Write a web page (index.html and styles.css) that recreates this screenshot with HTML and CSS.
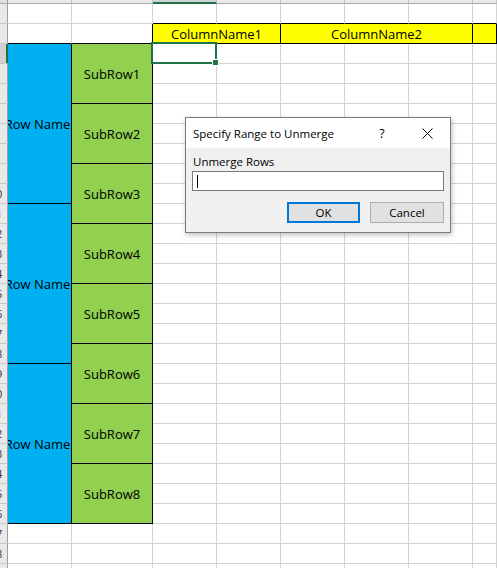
FILE: index.html
```html
<!DOCTYPE html>
<html>
<head>
<meta charset="utf-8">
<title>Sheet</title>
<link rel="stylesheet" href="styles.css">
</head>
<body>
<div class="sheet">
<table class="grid">
<colgroup><col class="c-rh"><col class="c-a"><col class="c-b"><col class="c-n"><col class="c-n"><col class="c-n"><col class="c-n"><col class="c-n"><col class="c-h"></colgroup>
<thead>
<tr class="colhead"><th class="corner"></th><th></th><th></th><th class="colsel"></th><th></th><th></th><th></th><th></th><th></th></tr>
</thead>
<tbody>
<tr><th class="rh"><span>1</span></th><td></td><td></td><td class="bb"></td><td class="bb"></td><td class="bb"></td><td class="bb"></td><td class="bb"></td><td class="bb"></td></tr>
<tr><th class="rh"><span>2</span></th><td class="bb"></td><td class="bb br"></td><td class="yel" colspan="2">ColumnName1</td><td class="yel" colspan="3">ColumnName2</td><td class="yel"></td></tr>
<tr><th class="rh rsel"><span>3</span></th><td class="blue" rowspan="8"><div class="over">Row Name</div></td><td class="green" rowspan="3">SubRow1</td><td class="cur"><div class="sel"><i class="handle"></i></div></td><td></td><td></td><td></td><td></td><td></td></tr>
<tr><th class="rh"><span>4</span></th><td></td><td></td><td></td><td></td><td></td><td></td></tr>
<tr><th class="rh"><span>5</span></th><td></td><td></td><td></td><td></td><td></td><td></td></tr>
<tr><th class="rh"><span>6</span></th><td class="green" rowspan="3">SubRow2</td><td></td><td></td><td></td><td></td><td></td><td></td></tr>
<tr><th class="rh"><span>7</span></th><td></td><td></td><td></td><td></td><td></td><td></td></tr>
<tr><th class="rh"><span>8</span></th><td></td><td></td><td></td><td></td><td></td><td></td></tr>
<tr><th class="rh"><span>9</span></th><td class="green" rowspan="3">SubRow3</td><td></td><td></td><td></td><td></td><td></td><td></td></tr>
<tr><th class="rh"><span>10</span></th><td></td><td></td><td></td><td></td><td></td><td></td></tr>
<tr><th class="rh"><span>11</span></th><td class="blue" rowspan="8"><div class="over">Row Name</div></td><td></td><td></td><td></td><td></td><td></td><td></td></tr>
<tr><th class="rh"><span>12</span></th><td class="green" rowspan="3">SubRow4</td><td></td><td></td><td></td><td></td><td></td><td></td></tr>
<tr><th class="rh"><span>13</span></th><td></td><td></td><td></td><td></td><td></td><td></td></tr>
<tr><th class="rh"><span>14</span></th><td></td><td></td><td></td><td></td><td></td><td></td></tr>
<tr><th class="rh"><span>15</span></th><td class="green" rowspan="3">SubRow5</td><td></td><td></td><td></td><td></td><td></td><td></td></tr>
<tr><th class="rh"><span>16</span></th><td></td><td></td><td></td><td></td><td></td><td></td></tr>
<tr><th class="rh"><span>17</span></th><td></td><td></td><td></td><td></td><td></td><td></td></tr>
<tr><th class="rh"><span>18</span></th><td class="green" rowspan="3">SubRow6</td><td></td><td></td><td></td><td></td><td></td><td></td></tr>
<tr><th class="rh"><span>19</span></th><td class="blue" rowspan="8"><div class="over">Row Name</div></td><td></td><td></td><td></td><td></td><td></td><td></td></tr>
<tr><th class="rh"><span>20</span></th><td></td><td></td><td></td><td></td><td></td><td></td></tr>
<tr><th class="rh"><span>21</span></th><td class="green" rowspan="3">SubRow7</td><td></td><td></td><td></td><td></td><td></td><td></td></tr>
<tr><th class="rh"><span>22</span></th><td></td><td></td><td></td><td></td><td></td><td></td></tr>
<tr><th class="rh"><span>23</span></th><td></td><td></td><td></td><td></td><td></td><td></td></tr>
<tr><th class="rh"><span>24</span></th><td class="green" rowspan="3">SubRow8</td><td></td><td></td><td></td><td></td><td></td><td></td></tr>
<tr><th class="rh"><span>25</span></th><td></td><td></td><td></td><td></td><td></td><td></td></tr>
<tr><th class="rh"><span>26</span></th><td></td><td></td><td></td><td></td><td></td><td></td></tr>
<tr><th class="rh"><span>27</span></th><td></td><td></td><td></td><td></td><td></td><td></td><td></td><td></td></tr>
<tr><th class="rh"><span>28</span></th><td></td><td></td><td></td><td></td><td></td><td></td><td></td><td></td></tr>
<tr><th class="rh"><span>29</span></th><td></td><td></td><td></td><td></td><td></td><td></td><td></td><td></td></tr>
</tbody>
</table>

<div class="dialog">
  <div class="titlebar">
    <span class="title">Specify Range to Unmerge</span>
    <span class="help">?</span>
    <span class="close"><svg width="11" height="11" viewBox="0 0 11 11"><path d="M0.5 0.5L10.5 10.5M10.5 0.5L0.5 10.5" stroke="#000" stroke-width="1" fill="none"/></svg></span>
  </div>
  <div class="dbody">
    <div class="label">Unmerge Rows</div>
    <div class="input"><span class="caret"></span></div>
    <div class="buttons">
      <div class="btn btn-ok">OK</div>
      <div class="btn">Cancel</div>
    </div>
  </div>
</div>
</div>
</body>
</html>
```

FILE: styles.css
```css
html, body {
  margin: 0;
  padding: 0;
  background: #fff;
  overflow: hidden;
}
.sheet {
  position: relative;
  width: 497px;
  height: 568px;
  overflow: hidden;
}
.grid {
  table-layout: fixed;
  border-collapse: separate;
  border-spacing: 0;
  width: 497px;
  font-family: "Open Sans", "Noto Sans", sans-serif;
  font-size: 13px;
  color: #000;
}
.c-rh { width: 8px; }
.c-a { width: 64px; }
.c-b { width: 81px; }
.c-n { width: 64px; }
.c-h { width: 24px; }

.grid td, .grid th {
  box-sizing: border-box;
  padding: 0;
  border-right: 1px solid #d4d4d4;
  border-bottom: 1px solid #d4d4d4;
  height: 20px;
  line-height: 18px;
  text-align: center;
  vertical-align: middle;
  white-space: nowrap;
  font-weight: normal;
}
.colhead th {
  height: 4px;
  line-height: 0;
  font-size: 0;
  background: #e9e9e9;
  border-right: 1px solid #c6c6c6;
  border-bottom: 1px solid #a9a9a9;
}
.colhead th.colsel {
  background: #d2d2d2;
  border-bottom: 2px solid #217346;
}
.colhead th.corner {
  background: #e2e2e2;
  border-right: 1px solid #9e9e9e;
}
.grid th.rh {
  position: relative;
  z-index: 1;
  background: #e9e9e9;
  border-right: 1px solid #9e9e9e;
  border-bottom: 1px solid #c6c6c6;
  overflow: hidden;
  font-size: 11px;
  color: #333;
}
.grid th.rh span {
  display: block;
  width: 26px;
  margin-left: -17px;
  text-align: center;
}
.grid th.rsel {
  background: #d2d2d2;
  border-right-color: #217346;
  box-shadow: inset -1px 0 0 #217346;
}
.grid td.bb { border-bottom-color: #000; }
.grid td.br { border-right-color: #000; }
.grid td.yel {
  background: #ffff00;
  border-right-color: #000;
  border-bottom-color: #000;
}
.grid td.blue {
  background: #00b0f0;
  border-right-color: #000;
  border-bottom-color: #000;
}
.grid td.green {
  background: #92d050;
  border-right-color: #000;
  border-bottom-color: #000;
}
.over {
  margin: 0 -10px 0 -14px;
  text-align: center;
  white-space: nowrap;
}
.grid td.cur { position: relative; }
.sel {
  position: absolute;
  top: -2px;
  left: -2px;
  right: -1px;
  bottom: -1px;
  border: 2px solid #217346;
}
.handle {
  position: absolute;
  right: -4px;
  bottom: -4px;
  width: 5px;
  height: 5px;
  background: #217346;
  border: 1px solid #fff;
}

.dialog {
  position: absolute;
  left: 185px;
  top: 117px;
  width: 266px;
  height: 116px;
  box-sizing: border-box;
  border: 1px solid #7a7a7a;
  background: #f0f0f0;
  box-shadow: 1px 2px 5px rgba(0, 0, 0, 0.25);
  font-family: "Open Sans", "Noto Sans", sans-serif;
  font-size: 11.5px;
  color: #000;
  display: flex;
  flex-direction: column;
  z-index: 5;
}
.titlebar {
  height: 30px;
  background: #fff;
  display: flex;
  align-items: center;
  padding-left: 7px;
}
.title { flex: 1; }
.help {
  width: 44px;
  text-align: center;
  font-size: 12.5px;
  padding-left: 1px;
}
.close {
  width: 46px;
  display: flex;
  justify-content: center;
  align-items: center;
}
.dbody {
  flex: 1;
  display: flex;
  flex-direction: column;
  padding: 6px 6px 9px 6px;
}
.label {
  line-height: 16px;
  padding-left: 1px;
}
.input {
  margin-top: 1px;
  height: 20px;
  box-sizing: border-box;
  border: 1px solid #7a7a7a;
  background: #fff;
  display: flex;
  align-items: center;
}
.caret {
  width: 1px;
  height: 13px;
  margin-left: 4px;
  background: #000;
}
.buttons {
  margin-top: 11px;
  display: flex;
  justify-content: flex-end;
  gap: 10px;
}
.btn {
  width: 74px;
  height: 21px;
  box-sizing: border-box;
  border: 1px solid #adadad;
  background: #e1e1e1;
  display: flex;
  align-items: center;
  justify-content: center;
  line-height: 1;
}
.btn-ok {
  width: 73px;
  border: 2px solid #0078d7;
}
```
